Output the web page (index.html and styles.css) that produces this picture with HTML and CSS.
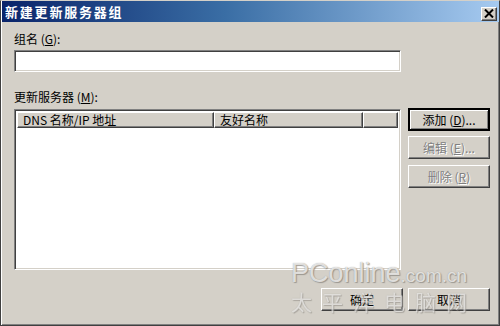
FILE: index.html
```html
<!DOCTYPE html>
<html lang="zh-CN">
<head>
<meta charset="utf-8">
<title>新建更新服务器组</title>
<link rel="stylesheet" href="styles.css">
</head>
<body>
<div class="window">
  <div class="titlebar">
    <span class="title">新建更新服务器组</span>
    <span class="close" aria-label="关闭">
      <svg width="10" height="9" viewBox="0 0 10 9"><path d="M1 0.5 L9 8.5 M9 0.5 L1 8.5" stroke="#000" stroke-width="2"/></svg>
    </span>
  </div>
  <div class="content">
    <div class="label">组名 (<u>G</u>):</div>
    <div class="input"></div>
    <div class="label label-gap">更新服务器 (<u>M</u>):</div>
    <div class="main-row">
      <div class="list">
        <div class="list-head">
          <div class="col col1">DNS 名称/IP 地址</div>
          <div class="col col2">友好名称</div>
          <div class="col col3"></div>
        </div>
      </div>
      <div class="side-buttons">
        <div class="btn btn-default">添加 (<u>D</u>)...</div>
        <div class="btn btn-disabled">编辑 (<u>E</u>)...</div>
        <div class="btn btn-disabled">删除 (<u>R</u>)</div>
      </div>
    </div>
    <div class="footer">
      <div class="btn">确定</div>
      <div class="btn">取消</div>
    </div>
  </div>
  <div class="watermark">
    <div class="wm-top"><span class="wm-big">PConline</span><span class="wm-small">.com.cn</span></div>
    <div class="wm-cn">太平洋电脑网</div>
  </div>
</div>
</body>
</html>
```

FILE: styles.css
```css
* { box-sizing: border-box; }
html, body { margin: 0; padding: 0; }
body {
  width: 500px;
  height: 326px;
  overflow: hidden;
  font-family: "Noto Sans CJK SC", "Liberation Sans", sans-serif;
  font-size: 12px;
  color: #000;
  background: #d4d0c8;
}
.window {
  position: relative;
  width: 500px;
  height: 326px;
  background: #d4d0c8;
  border: 1px solid #404040;
  border-top-color: #d4d0c8;
  border-left-color: #404040;
  box-shadow: inset 1px 1px #ffffff, inset -1px -1px #808080;
  display: flex;
  flex-direction: column;
}
.titlebar {
  height: 21px;
  margin: 0 0 0 1px;
  background: linear-gradient(to right, #0a246a 0%, #3a6ea5 45%, #a6caf0 100%);
  display: flex;
  align-items: center;
  justify-content: space-between;
  padding: 0 2px 0 3px;
}
.title {
  color: #fff;
  font-weight: bold;
  font-size: 13px;
  letter-spacing: 1.8px;
  line-height: 21px;
}
.close {
  width: 16px;
  height: 14px;
  margin-top: 4px;
  background: #d4d0c8;
  border: 1px solid;
  border-color: #fff #404040 #404040 #fff;
  box-shadow: inset -1px -1px #808080;
  display: flex;
  align-items: center;
  justify-content: center;
}
.content {
  flex: 1;
  padding: 10px 9px 0 13px;
  display: flex;
  flex-direction: column;
}
.label {
  line-height: 14px;
  height: 14px;
  white-space: nowrap;
}
.label u, .btn u { text-decoration: underline; }
.label-gap { margin-top: 18px; }
.input {
  margin-top: 4px;
  width: 387px;
  height: 22px;
  background: #fff;
  border: 1px solid;
  border-color: #808080 #fff #fff #808080;
  box-shadow: inset 1px 1px #404040, inset -1px -1px #d4d0c8;
}
.main-row {
  margin-top: 4px;
  display: flex;
  gap: 7px;
}
.list {
  margin-top: 1px;
  width: 387px;
  height: 161px;
  background: #fff;
  border: 1px solid;
  border-color: #808080 #fff #fff #808080;
  box-shadow: inset 1px 1px #404040, inset -1px -1px #d4d0c8;
  padding: 2px 2px 0 2px;
}
.list-head {
  display: flex;
  height: 16px;
}
.col {
  height: 16px;
  line-height: 14px;
  background: #d4d0c8;
  border: 1px solid;
  border-color: #fff #404040 #404040 #fff;
  box-shadow: inset -1px -1px #808080;
  padding-left: 5px;
  white-space: nowrap;
  overflow: hidden;
}
.col1 { width: 197px; }
.col2 { width: 149px; }
.col3 { flex: 1; }
.side-buttons {
  display: flex;
  flex-direction: column;
  gap: 5px;
}
.btn {
  width: 82px;
  height: 23px;
  line-height: 21px;
  text-align: center;
  background: #d4d0c8;
  border: 1px solid;
  border-color: #fff #404040 #404040 #fff;
  box-shadow: inset -1px -1px #808080;
  white-space: nowrap;
}
.btn-default {
  border: 2px solid #000;
  line-height: 19px;
  box-shadow: inset 1px 1px #fff, inset -1px -1px #808080;
}
.btn-disabled {
  color: #808080;
  text-shadow: 1px 1px #fff;
}
.side-buttons .btn-disabled:last-child { margin-top: 1px; }
.footer {
  margin-top: 18px;
  display: flex;
  justify-content: flex-end;
  gap: 5px;
}
.watermark {
  position: absolute;
  left: 290px;
  top: 258px;
  width: 190px;
  pointer-events: none;
  color: rgba(255, 255, 255, 0.7);
  font-family: "Liberation Sans", "Noto Sans CJK SC", sans-serif;
  text-shadow: 0 0 1px rgba(143, 139, 132, 0.8), 1px 1px 1px rgba(143, 139, 132, 0.8);
}
.wm-top { line-height: 28px; white-space: nowrap; }
.wm-big { font-size: 27px; }
.wm-small { font-size: 19px; }
.wm-cn {
  font-family: "Noto Sans CJK SC", sans-serif;
  font-size: 21px;
  line-height: 22px;
  letter-spacing: 10px;
  margin-top: -2px;
  opacity: 0.75;
}
```
